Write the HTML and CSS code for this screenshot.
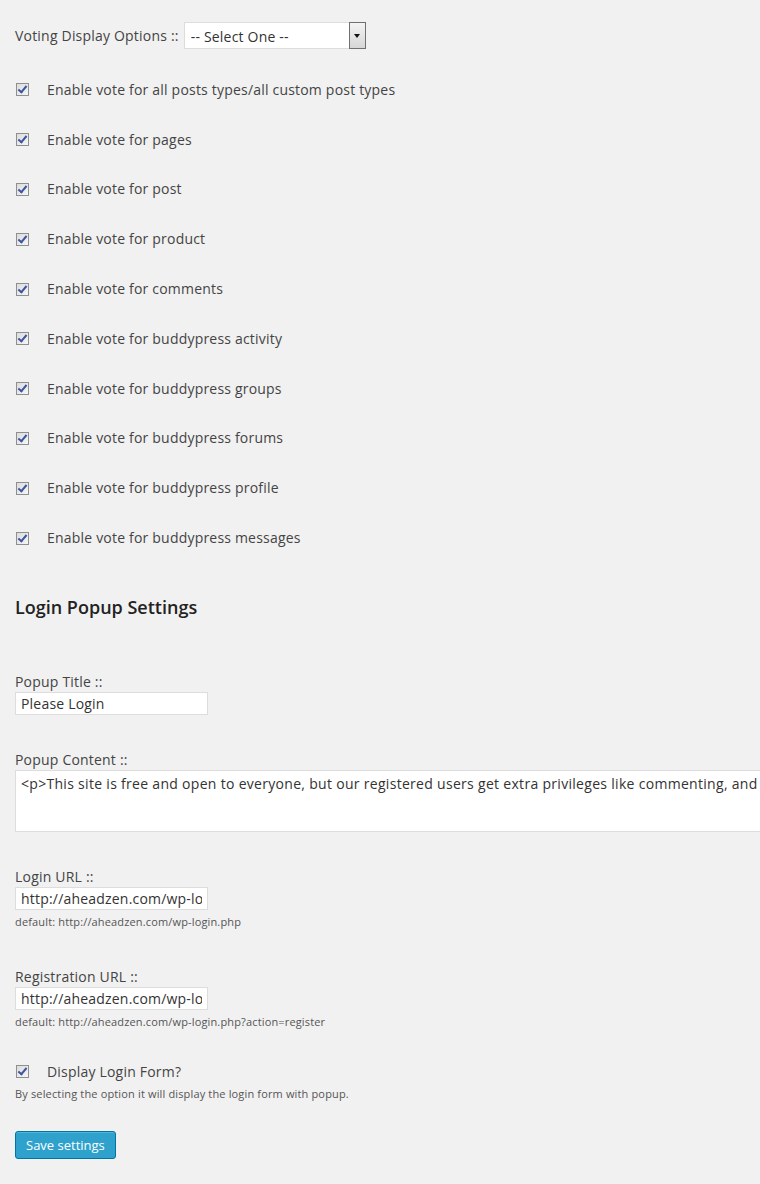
FILE: index.html
```html
<!DOCTYPE html>
<html>
<head>
  <title>Voting Settings</title>
  <link rel="stylesheet" href="styles.css">
</head>
<body>
  <form class="settings">
    <div class="select-row">
      <label for="votingDisplay">Voting Display Options ::</label>
      <span class="select-box">
        <select id="votingDisplay">
          <option selected>-- Select One --</option>
          <option>Top</option>
          <option>Bottom</option>
        </select>
        <span class="select-arrow"></span>
      </span>
    </div>

    <div class="checks">
      <label class="check-row"><input type="checkbox" checked> Enable vote for all posts types/all custom post types</label>
      <label class="check-row"><input type="checkbox" checked> Enable vote for pages</label>
      <label class="check-row"><input type="checkbox" checked> Enable vote for post</label>
      <label class="check-row"><input type="checkbox" checked> Enable vote for product</label>
      <label class="check-row"><input type="checkbox" checked> Enable vote for comments</label>
      <label class="check-row"><input type="checkbox" checked> Enable vote for buddypress activity</label>
      <label class="check-row"><input type="checkbox" checked> Enable vote for buddypress groups</label>
      <label class="check-row"><input type="checkbox" checked> Enable vote for buddypress forums</label>
      <label class="check-row"><input type="checkbox" checked> Enable vote for buddypress profile</label>
      <label class="check-row"><input type="checkbox" checked> Enable vote for buddypress messages</label>
    </div>

    <h2>Login Popup Settings</h2>

    <div class="field first">
      <label for="popupTitle">Popup Title ::</label>
      <input type="text" id="popupTitle" class="text-input" value="Please Login">
    </div>

    <div class="field">
      <label for="popupContent">Popup Content ::</label>
      <textarea id="popupContent" class="content-area"><p>This site is free and open to everyone, but our registered users get extra privileges like commenting, and voting.</p></textarea>
    </div>

    <div class="field">
      <label for="loginUrl">Login URL ::</label>
      <input type="text" id="loginUrl" class="text-input" value="http://aheadzen.com/wp-login.php">
      <p class="description">default: http://aheadzen.com/wp-login.php</p>
    </div>

    <div class="field after-desc">
      <label for="registerUrl">Registration URL ::</label>
      <input type="text" id="registerUrl" class="text-input" value="http://aheadzen.com/wp-login.php?action=register">
      <p class="description">default: http://aheadzen.com/wp-login.php?action=register</p>
    </div>

    <div class="field login-form">
      <label class="check-line"><input type="checkbox" checked> Display Login Form?</label>
      <p class="description">By selecting the option it will display the login form with popup.</p>
    </div>

    <button type="button" class="button-primary">Save settings</button>
  </form>
</body>
</html>
```

FILE: styles.css
```css
html {
  overflow: hidden;
}

body {
  margin: 0;
  padding: 0 15px;
  background-color: #f1f1f1;
  color: #444;
  font-family: "Open Sans", sans-serif;
  font-size: 14px;
  line-height: 20px;
  letter-spacing: 0.2px;
}

.select-row {
  display: flex;
  align-items: center;
  gap: 5px;
  margin-top: 22px;
  height: 27px;
}

.select-box {
  display: inline-flex;
  box-sizing: border-box;
  width: 182px;
  height: 27px;
  border: 1px solid #ddd;
  background-color: #fff;
}

.select-box select {
  flex: 1;
  appearance: none;
  -webkit-appearance: none;
  border: none;
  background: transparent;
  font-family: "Open Sans", sans-serif;
  font-size: 14px;
  letter-spacing: 0.2px;
  color: #333;
  padding: 2px 0 0 6px;
  outline: none;
}

.select-arrow {
  width: 15px;
  margin: -1px -1px -1px 0;
  border: 1px solid #707070;
  background: linear-gradient(#f4f4f4, #d6d6d6);
  display: flex;
  align-items: center;
  justify-content: center;
}

.select-arrow::after {
  content: "";
  border-left: 3.5px solid transparent;
  border-right: 3.5px solid transparent;
  border-top: 4px solid #111;
}

.checks {
  margin-top: 16px;
}

.check-row,
.check-line {
  display: flex;
  align-items: center;
  height: 49.8px;
}

.check-line {
  height: 20px;
}

input[type="checkbox"] {
  appearance: none;
  -webkit-appearance: none;
  width: 13px;
  height: 13px;
  margin: 0 18px 0 1px;
  border: 1px solid #8f8f8f;
  background: linear-gradient(135deg, #dcdcdc, #f6f6f6);
  position: relative;
  flex-shrink: 0;
}

input[type="checkbox"]:checked::after {
  content: "";
  position: absolute;
  left: 3px;
  top: 0px;
  width: 3px;
  height: 7px;
  border-right: 2px solid #3d55a0;
  border-bottom: 2px solid #3d55a0;
  transform: rotate(40deg);
}

h2 {
  margin: 32px 0 0;
  font-size: 18px;
  font-weight: 600;
  line-height: 24px;
  letter-spacing: 0;
  color: #222;
}

.field {
  margin-top: 35px;
}

.field.first {
  margin-top: 53px;
}

.field.after-desc {
  margin-top: 37px;
}

.field label {
  display: block;
}

.field .check-line {
  display: flex;
}

.text-input {
  display: block;
  box-sizing: border-box;
  width: 193px;
  height: 23px;
  margin: 0;
  padding: 0 5px;
  border: 1px solid #ddd;
  background-color: #fff;
  font-family: "Open Sans", sans-serif;
  font-size: 14px;
  letter-spacing: 0.2px;
  color: #333;
  outline: none;
}

.content-area {
  display: block;
  box-sizing: border-box;
  width: 800px;
  height: 62px;
  margin: 0;
  padding: 3px 5px;
  border: 1px solid #ddd;
  background-color: #fff;
  font-family: "Open Sans", sans-serif;
  font-size: 14px;
  line-height: 20px;
  letter-spacing: 0.3px;
  color: #333;
  resize: none;
  white-space: nowrap;
  overflow: hidden;
  outline: none;
}

.description {
  margin: 4px 0 0;
  font-size: 11px;
  line-height: 16px;
  letter-spacing: 0.15px;
  color: #555;
}

.login-form {
  margin-top: 32px;
}

.button-primary {
  margin-top: 29px;
  height: 28px;
  padding: 0 10px;
  border: 1px solid #0074a2;
  border-radius: 3px;
  background-color: #2ea2cc;
  box-shadow: inset 0 1px 0 rgba(120, 200, 230, 0.5);
  color: #fff;
  font-family: "Open Sans", sans-serif;
  font-size: 13px;
  cursor: pointer;
}

.button-primary:hover {
  background-color: #1e8cbe;
}
```
